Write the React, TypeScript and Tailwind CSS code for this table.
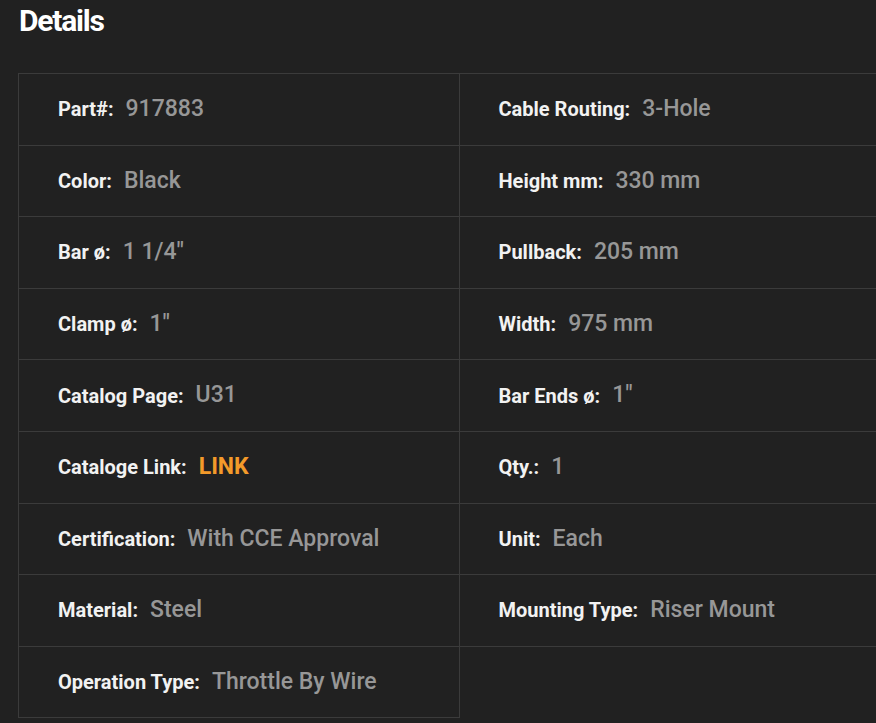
const LEFT: [string, string][] = [
  ["Part#:", "917883"],
  ["Color:", "Black"],
  ["Bar ø:", "1 1/4\""],
  ["Clamp ø:", "1\""],
  ["Catalog Page:", "U31"],
  ["Cataloge Link:", "LINK"],
  ["Certification:", "With CCE Approval"],
  ["Material:", "Steel"],
  ["Operation Type:", "Throttle By Wire"],
];

const RIGHT: [string, string][] = [
  ["Cable Routing:", "3-Hole"],
  ["Height mm:", "330 mm"],
  ["Pullback:", "205 mm"],
  ["Width:", "975 mm"],
  ["Bar Ends ø:", "1\""],
  ["Qty.:", "1"],
  ["Unit:", "Each"],
  ["Mounting Type:", "Riser Mount"],
];

function Cell({ label, value }: { label: string; value: string }) {
  const isLink = value === "LINK";
  return (
    <div className="flex h-[71.6px] items-center gap-[12px] border-b border-r border-[#3b3b3b] pl-[39px]">
      <span className="text-[20px] font-bold text-[#f2f2f2]">{label}</span>
      {isLink ? (
        <a className="text-[23px] font-bold text-[#f39a2a]">{value}</a>
      ) : (
        <span className="text-[23px] font-medium text-[#979797]">{value}</span>
      )}
    </div>
  );
}

export default function App() {
  const rows = LEFT.map((l, i) => [l, RIGHT[i]] as const);
  return (
    <div
      className="h-[723px] w-[876px] overflow-hidden bg-[#212121]"
      style={{ fontFamily: "Roboto, 'Liberation Sans', sans-serif" }}
    >
      <h2 className="pl-[19px] pt-[3px] text-[30px] font-bold leading-[36px] tracking-[-0.04em] text-white">
        Details
      </h2>
      <div className="ml-[18px] mt-[34px] grid w-[882px] grid-cols-2 border-l border-t border-[#3b3b3b]">
        {rows.map(([l, r], i) => (
          <div key={i} className="contents">
            <Cell label={l[0]} value={l[1]} />
            {r ? <Cell label={r[0]} value={r[1]} /> : <div />}
          </div>
        ))}
      </div>
    </div>
  );
}
